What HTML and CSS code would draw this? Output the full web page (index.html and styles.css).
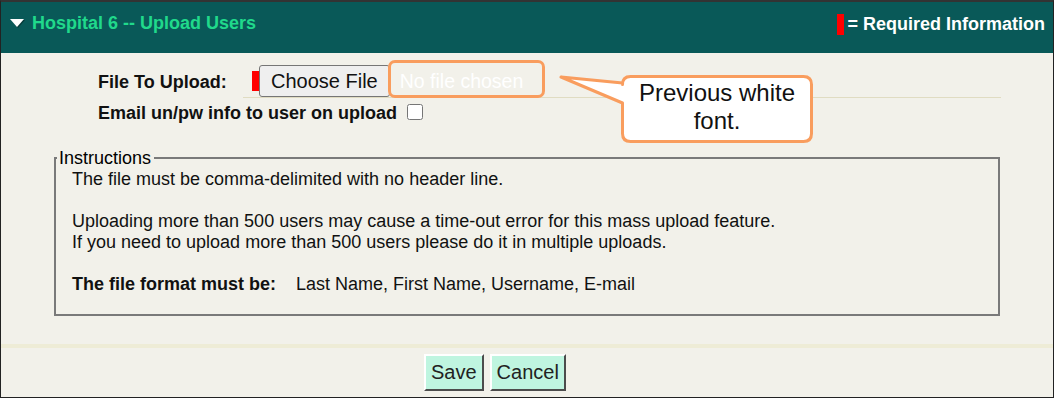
FILE: index.html
```html
<!DOCTYPE html>
<html lang="en">
<head>
    <meta charset="UTF-8">
    <title>Upload Users</title>
    <link rel="stylesheet" href="styles.css">
</head>
<body>
    <div class="frame">
        <div class="header">
            <div class="title">
                <span class="toggle"></span>
                <span>Hospital 6 -- Upload Users</span>
            </div>
            <div class="legend-required">
                <span class="req-mark"></span>
                <span>= Required Information</span>
            </div>
        </div>

        <div class="upload-form">
            <div class="row">
                <label class="label">File To Upload:</label>
                <div class="field">
                    <span class="req-mark small"></span>
                    <button class="choose-btn" type="button">Choose File</button>
                    <span class="file-name">No file chosen</span>
                </div>
            </div>
            <div class="row row-check">
                <label class="label" for="email-info">Email un/pw info to user on upload</label>
                <input type="checkbox" id="email-info">
            </div>
        </div>

        <fieldset class="instructions">
            <legend>Instructions</legend>
            <div class="instr-body">
                <p>The file must be comma-delimited with no header line.</p>
                <p>Uploading more than 500 users may cause a time-out error for this mass upload feature.<br>
                If you need to upload more than 500 users please do it in multiple uploads.</p>
                <p><b>The file format must be:</b><span class="format">Last Name, First Name, Username, E-mail</span></p>
            </div>
        </fieldset>

        <div class="separator"></div>

        <div class="actions">
            <button class="act-btn" type="button">Save</button>
            <button class="act-btn" type="button">Cancel</button>
        </div>

        <!-- annotation callout -->
        <svg class="callout-shape" width="262" height="76" viewBox="0 0 262 76">
            <path d="M75.5 4.5 H248.5 Q256.5 4.5 256.5 12.5 V61.5 Q256.5 69.5 248.5 69.5 H75.5 Q67.5 69.5 67.5 61.5 V31 L6 5 L67.5 11 V12.5 Q67.5 4.5 75.5 4.5 Z"
                  fill="#fff" stroke="#f99d5e" stroke-width="3" stroke-linejoin="round"/>
        </svg>
        <div class="callout-text">Previous white<br>font.</div>
    </div>
</body>
</html>
```

FILE: styles.css
```css
body {
    margin: 0;
    font-family: 'Liberation Sans', Arial, sans-serif;
    font-size: 18px;
    color: #111;
}
.frame {
    position: relative;
    box-sizing: border-box;
    width: 1054px;
    height: 398px;
    border: 1px solid #222;
    border-top: 2px solid #333;
    background-color: #f2f1ea;
}
.header {
    height: 51px;
    background-color: #095958;
    display: flex;
    justify-content: space-between;
    align-items: flex-start;
    padding: 0 8px 0 9px;
}
.title {
    display: flex;
    align-items: center;
    gap: 8px;
    margin-top: 10px;
    line-height: 22px;
    font-size: 18px;
    font-weight: bold;
    color: #20d98b;
}
.toggle {
    width: 0;
    height: 0;
    border-left: 7.5px solid transparent;
    border-right: 7.5px solid transparent;
    border-top: 8px solid #fff;
    filter: drop-shadow(1px 1px 0 rgba(0, 0, 0, 0.35));
}
.legend-required {
    display: flex;
    align-items: center;
    gap: 3px;
    margin-top: 12px;
    line-height: 21px;
    font-size: 18px;
    font-weight: bold;
    color: #fff;
}
.req-mark {
    display: inline-block;
    width: 7px;
    height: 21px;
    background-color: #f00;
}
.req-mark.small {
    height: 20px;
}
.upload-form {
    padding: 12px 0 0 97px;
}
.row {
    display: flex;
    align-items: center;
}
.label {
    font-weight: bold;
    line-height: 20px;
}
.row .label {
    width: 145px;
}
.row-check .label {
    width: auto;
}
.field {
    flex: 1;
    margin-right: 52px;
    display: flex;
    align-items: center;
    padding-left: 9px;
    border-bottom: 1px solid #e0dcc2;
}
.choose-btn {
    height: 32px;
    padding: 0 11px;
    font-family: inherit;
    font-size: 20px;
    color: #111;
    background-color: #efefef;
    border: 1px solid #767676;
    border-radius: 3px;
}
.file-name {
    position: relative;
    padding: 0 10px;
    font-size: 19.5px;
    color: #fff;
}
.file-name::after {
    content: '';
    position: absolute;
    top: -10px;
    bottom: -5px;
    left: -2px;
    right: -12px;
    border: 3px solid #f99d5e;
    border-radius: 7px;
}
.row-check {
    margin-top: 5px;
}
.row-check input {
    width: 16px;
    height: 16px;
    margin: -2px 0 0 10px;
}
.instructions {
    margin: 26px 0 0 53px;
    width: 946px;
    box-sizing: border-box;
    padding: 0 0 19px 1px;
    border: 2px solid #7a7a7a;
}
.instructions legend {
    padding: 0 3px 0 2px;
    line-height: 18px;
    color: #000;
}
.instr-body {
    padding: 2px 0 0 15px;
    line-height: 21px;
}
.instr-body p {
    margin: 0 0 21px;
}
.instr-body p:last-child {
    margin-bottom: 0;
}
.format {
    margin-left: 20px;
}
.separator {
    margin-top: 28px;
    height: 4px;
    background-color: #eeecd6;
}
.actions {
    display: flex;
    gap: 6px;
    padding: 6px 0 0 423px;
}
.act-btn {
    height: 37px;
    padding: 0 5px;
    font-family: inherit;
    font-size: 20px;
    color: #222;
    background-color: #bff5e0;
    border: 2px outset #ddd;
    border-color: #fff #a0a0a0 #a0a0a0 #fff;
}
.callout-shape {
    position: absolute;
    left: 554px;
    top: 70px;
}
.callout-text {
    position: absolute;
    left: 621px;
    top: 77px;
    width: 190px;
    text-align: center;
    font-size: 24px;
    line-height: 28px;
    color: #111;
}
```
